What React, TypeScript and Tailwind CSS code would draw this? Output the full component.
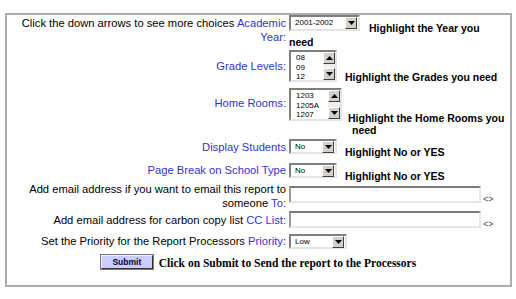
import React from "react";

const Arrow = ({ up = false }: { up?: boolean }) => (
  <div className="flex items-center justify-center w-[12px] h-[12px] bg-[#d4d0c8] border border-t-white border-l-white border-b-[#404040] border-r-[#404040] box-border">
    <svg width="7" height="4" viewBox="0 0 7 4">
      {up ? <path d="M0 4 L3.5 0 L7 4 Z" fill="#000" /> : <path d="M0 0 L7 0 L3.5 4 Z" fill="#000" />}
    </svg>
  </div>
);

const Dropdown = ({ value, className }: { value: string; className: string }) => (
  <div
    className={`flex items-center justify-between box-border bg-white border-2 border-t-[#7f7f7f] border-l-[#7f7f7f] border-b-[#e4e4e4] border-r-[#e4e4e4] pl-[4px] pr-[1px] shrink-0 ${className}`}
  >
    <span className="text-[8px] leading-[10px] text-black">{value}</span>
    <Arrow />
  </div>
);

const ListBox = ({ items, className }: { items: string[]; className: string }) => (
  <div
    className={`flex box-border bg-white border-2 border-t-[#7f7f7f] border-l-[#7f7f7f] border-b-[#e4e4e4] border-r-[#e4e4e4] shrink-0 ${className}`}
  >
    <div className="flex-1 pl-[5px] pt-[1px] text-[8px] leading-[9.5px] text-black">
      {items.map((i) => (
        <div key={i}>{i}</div>
      ))}
    </div>
    <div className="flex flex-col w-[12px] bg-[#eeeeee]">
      <Arrow up />
      <div className="flex-1" />
      <Arrow />
    </div>
  </div>
);

const TextInput = () => (
  <div className="w-[192px] h-[17px] box-border bg-white border-2 border-t-[#7a7a7a] border-l-[#9a9a9a] border-b-[#e6e6e6] border-r-[#e6e6e6] shrink-0" />
);

const Label = ({ children, className = "" }: { children: React.ReactNode; className?: string }) => (
  <div className={`w-[279px] shrink-0 text-right text-[11.2px] leading-[14px] text-black ${className}`}>{children}</div>
);

const Link = ({ children }: { children: React.ReactNode }) => <span className="text-[#3333cc]">{children}</span>;

const Hint = ({ children, className = "" }: { children: React.ReactNode; className?: string }) => (
  <div className={`text-[10.5px] leading-[14px] font-bold text-black ${className}`}>{children}</div>
);

export default function App() {
  return (
    <div className="w-[516px] h-[299px] bg-white pt-[13px] pl-[5px] font-['Liberation_Sans',Arial,sans-serif]">
      <div className="w-[507px] h-[274px] box-border border-2 border-[#adadad] flex flex-col">
        {/* Academic Year */}
        <div className="flex items-start">
          <Label className="mt-[1px]">
            Click the down arrows to see more choices <Link>Academic</Link>
            <br />
            <Link>Year:</Link>
          </Label>
          <div className="ml-[3px] flex flex-col">
            <div className="flex items-start">
              <Dropdown value="2001-2002" className="w-[71px] h-[16px]" />
              <Hint className="ml-[9px] mt-[6px]">Highlight the Year you</Hint>
            </div>
            <Hint>need</Hint>
          </div>
        </div>

        {/* Grade Levels */}
        <div className="flex items-start mt-[1px]">
          <Label className="mt-[9px]">
            <Link>Grade Levels:</Link>
          </Label>
          <div className="ml-[3px] flex items-start">
            <ListBox items={["08", "09", "12"]} className="w-[48px] h-[32px]" />
            <Hint className="ml-[8px] mt-[20px]">Highlight the Grades you need</Hint>
          </div>
        </div>

        {/* Home Rooms */}
        <div className="flex items-start mt-[4px]">
          <Label className="mt-[8px]">
            <Link>Home Rooms:</Link>
          </Label>
          <div className="ml-[3px] flex items-start">
            <ListBox items={["1203", "1205A", "1207"]} className="w-[53px] h-[33px]" />
            <div className="ml-[6px] mt-[24px] text-[10.5px] leading-[12px] font-bold text-black">
              Highlight the Home Rooms you
              <div className="pl-[4px]">need</div>
            </div>
          </div>
        </div>

        {/* Display Students */}
        <div className="flex items-start mt-[3px]">
          <Label className="mt-[1px]">
            <Link>Display Students</Link>
          </Label>
          <div className="ml-[3px] flex items-start">
            <Dropdown value="No" className="w-[48px] h-[15px]" />
            <Hint className="ml-[8px] mt-[6px]">Highlight No or YES</Hint>
          </div>
        </div>

        {/* Page Break */}
        <div className="flex items-start mt-[4px]">
          <Label>
            <Link>Page Break on School Type</Link>
          </Label>
          <div className="ml-[3px] flex items-start">
            <Dropdown value="No" className="w-[48px] h-[15px]" />
            <Hint className="ml-[8px] mt-[6px]">Highlight No or YES</Hint>
          </div>
        </div>

        {/* Email To */}
        <div className="flex items-start mt-[3px]">
          <Label className="-mt-[4px]">
            Add email address if you want to email this report to
            <br />
            someone <Link>To:</Link>
          </Label>
          <div className="ml-[3px] flex items-start">
            <TextInput />
            <span className="ml-[2px] mt-[9px] text-[9px] leading-[9px] text-[#444]">&lt;&gt;</span>
          </div>
        </div>

        {/* CC List */}
        <div className="flex items-start mt-[1px]">
          <Label className="mt-[2px]">
            Add email address for carbon copy list <Link>CC List:</Link>
          </Label>
          <div className="ml-[3px] flex items-start">
            <TextInput />
            <span className="ml-[2px] mt-[9px] text-[9px] leading-[9px] text-[#444]">&lt;&gt;</span>
          </div>
        </div>

        {/* Priority */}
        <div className="flex items-start mt-[5px]">
          <Label>
            Set the Priority for the Report Processors <Link>Priority:</Link>
          </Label>
          <div className="ml-[3px] flex items-start">
            <Dropdown value="Low" className="w-[58px] h-[15px]" />
          </div>
        </div>

        {/* Submit */}
        <div className="flex items-start justify-center mt-[6px]">
          <button className="w-[52px] h-[14px] box-border bg-[#ccccff] border border-t-[#f0f0ff] border-l-[#f0f0ff] border-b-[#333] border-r-[#333] outline outline-1 outline-[#777] text-[8.5px] leading-[10px] font-bold text-[#000033] p-0">
            Submit
          </button>
          <span className="ml-[6px] mt-[1px] text-[11.5px] leading-[14px] font-bold text-black font-['Liberation_Serif','Times_New_Roman',serif]">
            Click on Submit to Send the report to the Processors
          </span>
        </div>
      </div>
    </div>
  );
}
